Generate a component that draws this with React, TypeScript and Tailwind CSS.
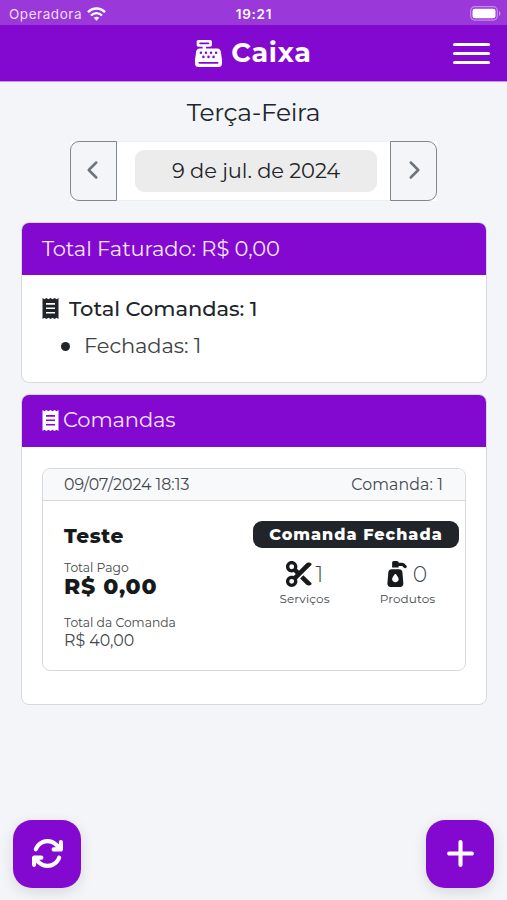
import { FaArrowsRotate, FaCashRegister, FaPlus, FaPumpSoap, FaScissors } from "react-icons/fa6";
import { ChevronLeft, ChevronRight } from "lucide-react";

export default function App() {
  return (
    <div className="flex h-[900px] w-[507px] flex-col overflow-hidden bg-[#f3f5f9] font-[Montserrat,Inter,sans-serif] text-[#212529]">
      <StatusBar />
      <Header />
      <main className="flex flex-1 flex-col pl-[21px] pr-5">
        <DatePicker />
        <Summary />
        <Orders />
      </main>
      <footer className="flex h-20 items-start justify-between px-[13px]">
        <button className="flex size-[68px] items-center justify-center rounded-[19px] bg-[#8309d0] pb-px text-white shadow-[0_4px_14px_rgba(0,0,0,0.12)]">
          <FaArrowsRotate className="size-[33px]" />
        </button>
        <button className="flex size-[68px] items-center justify-center rounded-[19px] bg-[#8309d0] pb-px text-white shadow-[0_4px_14px_rgba(0,0,0,0.12)]">
          <FaPlus className="size-[33px]" />
        </button>
      </footer>
    </div>
  );
}

function StatusBar() {
  return (
    <div className="grid h-[25px] shrink-0 grid-cols-3 items-center bg-[#9b38d9] pl-[9px] pr-[6px] pt-[3px] font-[Inter,sans-serif] text-[13.5px] text-white">
      <div className="flex items-center gap-[5px]">
        <span className="tracking-[0.55px] text-[#efdcfa]">Operadora</span>
        <svg className="mb-px shrink-0" width="19" height="14" viewBox="0 0 19 14" fill="none" stroke="white" strokeWidth="2.4">
          <path d="M1 5.2C5.8.2 13.2.2 18 5.2" />
          <path d="M4 8.5c3.2-3.2 7.8-3.2 11 0" />
          <path d="M6.7 10.8c1.6-1.5 4-1.5 5.6 0L9.5 13.7z" fill="white" stroke="none" />
        </svg>
      </div>
      <span className="-ml-[2px] text-center font-semibold tracking-[0.7px]">19:21</span>
      <svg className="mb-px justify-self-end" width="31" height="15" viewBox="0 0 31 15">
        <rect x=".7" y=".7" width="26.6" height="13.4" rx="4" fill="none" stroke="#c58ce9" strokeWidth="1.2" />
        <rect x="2.5" y="2.7" width="23" height="9.6" rx="2.2" fill="white" />
        <path d="M29 5c2 .8 2 4 0 4.8z" fill="#c58ce9" />
      </svg>
    </div>
  );
}

function Header() {
  return (
    <header className="grid h-[57px] shrink-0 grid-cols-[1fr_auto_1fr] items-center border-b border-[#c995e9] bg-[#8309d0] px-[17px] text-white">
      <span />
      <h1 className="flex items-center gap-[9px] text-[27px] font-bold">
        <FaCashRegister className="size-[27px]" />
        <span className="pt-px tracking-[0.8px]">Caixa</span>
      </h1>
      <button className="flex w-[37px] flex-col gap-[6px] justify-self-end">
        <span className="h-[3px] rounded-full bg-white" />
        <span className="h-[3px] rounded-full bg-white" />
        <span className="h-[3px] rounded-full bg-white" />
      </button>
    </header>
  );
}

function DatePicker() {
  return (
    <section className="flex flex-col items-center pr-px pt-3">
      <h2 className="h-[47px] text-[25px] leading-[37px] tracking-[-0.35px]">Terça-Feira</h2>
      <div className="flex h-[60px] w-[367px] bg-white text-[#6c757d]">
        <button className="flex w-[47px] items-center justify-center rounded-l-[9px] border border-[#82878d] bg-[#f3f5f9] pb-[3px] pr-[3px]">
          <ChevronLeft className="h-[30px] w-[31px]" strokeWidth={2} />
        </button>
        <div className="flex flex-1 items-center justify-center border-y border-[#eceef2] pl-[5px]">
          <span className="flex h-[42px] w-[242px] items-center justify-center rounded-[9px] bg-[#ececed] text-[21px] tracking-[-0.1px] text-[#212529]">
            9 de jul. de 2024
          </span>
        </div>
        <button className="flex w-[47px] items-center justify-center rounded-r-[9px] border border-[#82878d] bg-[#f3f5f9] pb-[3px] pl-[2px]">
          <ChevronRight className="h-[30px] w-[31px]" strokeWidth={2} />
        </button>
      </div>
    </section>
  );
}

function ReceiptIcon() {
  return (
    <svg className="shrink-0" width="17" height="21" viewBox="0 0 17 21">
      <path
        d="M.5 0L2.4 1.3 4.4 0l2 1.3 2.1-1.3 2 1.3L12.6 0l2 1.3L16.5 0v21l-1.9-1.3-2 1.3-2.1-1.3-2 1.3-2.1-1.3-2 1.3-2-1.3L.5 21zM4 5v1.7h9V5zm0 4.4v1.7h9V9.4zm0 4.5v1.7h9v-1.7z"
        fill="currentColor"
        fillRule="evenodd"
      />
    </svg>
  );
}

function Summary() {
  return (
    <section className="mt-[21px] h-[161px] shrink-0 overflow-hidden rounded-lg border border-[#d7d9dd] bg-white">
      <div className="flex h-[52px] items-center bg-[#8309d0] px-5 text-[21px] text-[#f3e5fb]">
        <span className="tracking-[-0.1px]">Total Faturado: R$ 0,00</span>
      </div>
      <div className="px-5 pt-[15px]">
        <div className="flex h-9 items-center gap-[10px] text-[21px] font-medium">
          <ReceiptIcon />
          <span className="pt-px tracking-[-0.05px]">Total Comandas: 1</span>
        </div>
        <div className="flex h-10 items-center gap-[14px] pl-[19px] text-[21px] text-[#3e4246]">
          <span className="size-[9px] rounded-full bg-[#212529]" />
          <span className="tracking-[-0.1px]">Fechadas: 1</span>
        </div>
      </div>
    </section>
  );
}

function Orders() {
  return (
    <section className="mt-[11px] h-[311px] shrink-0 overflow-hidden rounded-lg border border-[#d7d9dd] bg-white">
      <div className="flex h-[52px] items-center bg-[#8309d0] px-5 pb-[2px] text-[21px] text-white">
        <ReceiptIcon />
        <span className="ml-[4px] tracking-[-0.1px] text-[#f3e5fb]">Comandas</span>
      </div>
      <OrderCard />
    </section>
  );
}

function OrderCard() {
  return (
    <article className="mx-5 mt-[21px] h-[203px] overflow-hidden rounded-lg border-[1.5px] border-[#d7d9dc] bg-white">
      <div className="flex h-[32px] items-center justify-between border-b border-[#d5d7da] bg-[#f8f9fb] pl-[21px] pr-[22px] text-[15.8px] text-[#44484b]">
        <span>09/07/2024 18:13</span>
        <span className="tracking-[0.1px]">Comanda: 1</span>
      </div>
      <div className="flex justify-between pl-[21px] pr-[6px] pt-[20px]">
        <div className="flex flex-col whitespace-nowrap text-[#44484b]">
          <h3 className="h-[39px] text-[20px] font-extrabold leading-[30px] tracking-[0.6px] text-[#17191b]">Teste</h3>
          <span className="text-[12.3px] leading-[15px]">Total Pago</span>
          <strong className="h-[39px] text-[22px] font-extrabold leading-[23px] tracking-[0.8px] text-[#17191b]">R$ 0,00</strong>
          <span className="text-[12.3px] leading-[17px]">Total da Comanda</span>
          <span className="text-[15.8px] leading-5">R$ 40,00</span>
        </div>
        <div className="flex w-[206px] flex-col">
          <span className="flex h-[27px] items-center justify-center rounded-[9px] bg-[#212529] text-base font-extrabold text-white">
            <span className="pt-px tracking-[1px]">Comanda Fechada</span>
          </span>
          <div className="grid grid-cols-2 pt-[13px] text-center text-xs text-[#44484b]">
            <div>
              <div className="flex h-[26px] items-center justify-center gap-1 text-[22px] font-light">
                <FaScissors className="size-[26px] text-[#17191b]" />
                <span className="pt-px">1</span>
              </div>
              <span className="block pt-[3px] leading-[18px] tracking-[0.1px]">Serviços</span>
            </div>
            <div>
              <div className="flex h-[26px] items-center justify-center gap-[3px] pr-1 text-[22px] font-light">
                <FaPumpSoap className="size-[26px] text-[#17191b]" />
                <span className="pt-px">0</span>
              </div>
              <span className="block pt-[3px] leading-[18px] tracking-[0.1px]">Produtos</span>
            </div>
          </div>
        </div>
      </div>
    </article>
  );
}
